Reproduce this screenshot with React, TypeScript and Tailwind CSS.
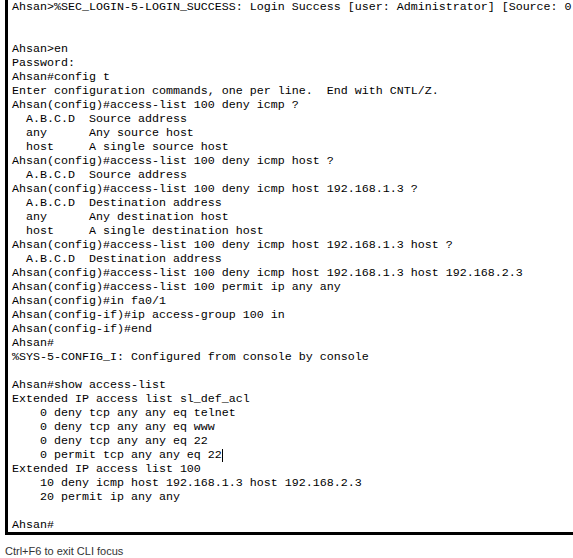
import React from "react";

const lines: string[] = [
  "Ahsan>%SEC_LOGIN-5-LOGIN_SUCCESS: Login Success [user: Administrator] [Source: 0",
  "",
  "",
  "Ahsan>en",
  "Password:",
  "Ahsan#config t",
  "Enter configuration commands, one per line.  End with CNTL/Z.",
  "Ahsan(config)#access-list 100 deny icmp ?",
  "  A.B.C.D  Source address",
  "  any      Any source host",
  "  host     A single source host",
  "Ahsan(config)#access-list 100 deny icmp host ?",
  "  A.B.C.D  Source address",
  "Ahsan(config)#access-list 100 deny icmp host 192.168.1.3 ?",
  "  A.B.C.D  Destination address",
  "  any      Any destination host",
  "  host     A single destination host",
  "Ahsan(config)#access-list 100 deny icmp host 192.168.1.3 host ?",
  "  A.B.C.D  Destination address",
  "Ahsan(config)#access-list 100 deny icmp host 192.168.1.3 host 192.168.2.3",
  "Ahsan(config)#access-list 100 permit ip any any",
  "Ahsan(config)#in fa0/1",
  "Ahsan(config-if)#ip access-group 100 in",
  "Ahsan(config-if)#end",
  "Ahsan#",
  "%SYS-5-CONFIG_I: Configured from console by console",
  "",
  "Ahsan#show access-list",
  "Extended IP access list sl_def_acl",
  "    0 deny tcp any any eq telnet",
  "    0 deny tcp any any eq www",
  "    0 deny tcp any any eq 22",
  "CURSOR",
  "Extended IP access list 100",
  "    10 deny icmp host 192.168.1.3 host 192.168.2.3",
  "    20 permit ip any any",
  "",
  "Ahsan#",
];

export default function App() {
  return (
    <div className="w-[573px] h-[558px] overflow-hidden bg-white flex flex-col">
      <div
        className="ml-[5px] border-l-[3px] border-b-[3px] border-black pl-[4px] pb-[2px] overflow-hidden text-[11.67px] leading-[14px] text-black"
        style={{ fontFamily: '"Liberation Mono", "Courier New", monospace' }}
      >
        {lines.map((l, i) =>
          l === "CURSOR" ? (
            <div key={i} className="whitespace-pre h-[14px] flex items-center">
              <span>{"    0 permit tcp any any eq 22"}</span>
              <span className="inline-block w-px h-[13px] bg-black" />
            </div>
          ) : (
            <div key={i} className="whitespace-pre h-[14px]">
              {l === "" ? "\u00a0" : l}
            </div>
          )
        )}
      </div>
      <div
        className="pl-[5px] pt-[9px] text-[11px] leading-[14px] text-[#333]"
        style={{ fontFamily: '"Liberation Sans", Arial, sans-serif' }}
      >
        Ctrl+F6 to exit CLI focus
      </div>
    </div>
  );
}
